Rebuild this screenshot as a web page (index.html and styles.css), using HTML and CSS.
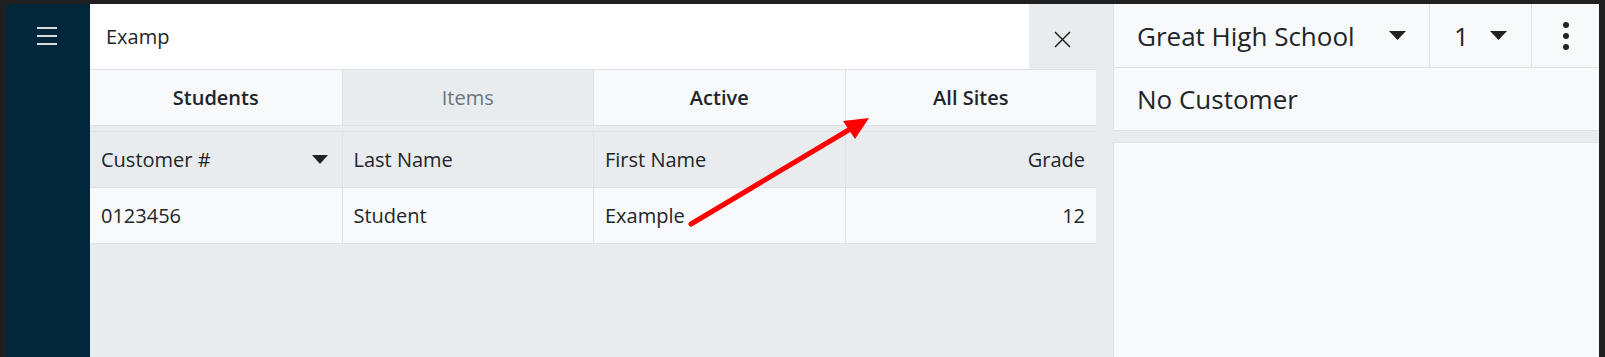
FILE: index.html
```html
<!DOCTYPE html>
<html lang="en">
<head>
    <meta charset="UTF-8">
    <meta name="viewport" content="width=device-width, initial-scale=1.0">
    <title>Customer Lookup</title>
    <link rel="stylesheet" href="styles.css">
</head>
<body>

    <div class="app">
        <!-- Side navigation -->
        <div class="sidebar">
            <div class="menu-btn">
                <span></span><span></span><span></span>
            </div>
        </div>

        <!-- Search column -->
        <div class="main">
            <div class="search-row">
                <div class="search-text">Examp</div>
                <div class="close-btn">
                    <svg width="17" height="17" viewBox="0 0 17 17">
                        <path d="M1 1 L16 16 M16 1 L1 16" stroke="#222" stroke-width="1.5" fill="none"/>
                    </svg>
                </div>
            </div>

            <div class="tabs">
                <div class="tab bold">Students</div>
                <div class="tab muted">Items</div>
                <div class="tab bold">Active</div>
                <div class="tab bold">All Sites</div>
            </div>

            <div class="table">
                <div class="cell head sort">Customer #
                    <svg width="16" height="9" viewBox="0 0 16 9"><polygon points="0,0 16,0 8,9" fill="#222"/></svg>
                </div>
                <div class="cell head">Last Name</div>
                <div class="cell head">First Name</div>
                <div class="cell head right">Grade</div>

                <div class="cell">0123456</div>
                <div class="cell">Student</div>
                <div class="cell">Example</div>
                <div class="cell right">12</div>
            </div>
        </div>

        <!-- Customer panel -->
        <div class="panel">
            <div class="topbar">
                <div class="site">Great High School
                    <svg width="17" height="9" viewBox="0 0 17 9"><polygon points="0,0 17,0 8.5,9" fill="#222"/></svg>
                </div>
                <div class="period">1
                    <svg width="17" height="9" viewBox="0 0 17 9"><polygon points="0,0 17,0 8.5,9" fill="#222"/></svg>
                </div>
                <div class="more">
                    <span></span><span></span><span></span>
                </div>
            </div>
            <div class="customer">No Customer</div>
            <div class="details"></div>
        </div>
    </div>

    <!-- annotation arrow -->
    <svg class="arrow" width="1605" height="357" viewBox="0 0 1605 357">
        <line x1="691" y1="224" x2="852" y2="128" stroke="#ff0000" stroke-width="5" stroke-linecap="round"/>
        <polygon points="869,118 843,121 855,139" fill="#ff0000"/>
    </svg>

</body>
</html>
```

FILE: styles.css
```css
body {
    margin: 0;
    padding: 4px 6px 0 6px;
    height: 357px;
    box-sizing: border-box;
    background: #202020;
    font-family: "Open Sans", "Noto Sans", sans-serif;
    color: #212529;
    overflow: hidden;
}
.app {
    display: flex;
    height: 353px;
    background: #e9ecef;
}
.sidebar {
    width: 84px;
    background: #02263a;
    flex-shrink: 0;
}
.menu-btn {
    width: 20px;
    margin: 23px 0 0 31px;
    display: flex;
    flex-direction: column;
    gap: 6px;
}
.menu-btn span {
    display: block;
    height: 2px;
    background: #d5dade;
}
.main {
    width: 1006px;
    flex-shrink: 0;
}
.search-row {
    display: flex;
    height: 65px;
    background: #fff;
    border-bottom: 1px solid #dee2e6;
}
.search-text {
    flex: 1;
    display: flex;
    align-items: center;
    padding-left: 16px;
    font-size: 20px;
}
.close-btn {
    width: 67px;
    background: #e9ecef;
    display: flex;
    align-items: center;
    justify-content: center;
    padding-top: 6px;
    box-sizing: border-box;
}
.tabs {
    display: grid;
    grid-template-columns: repeat(4, 1fr);
    height: 55px;
    border-bottom: 1px solid #dee2e6;
}
.tab {
    display: flex;
    align-items: center;
    justify-content: center;
    font-size: 20px;
    background: #f8f9fa;
    border-left: 1px solid #dee2e6;
}
.tab:first-child {
    border-left: none;
}
.tab.bold {
    font-weight: 600;
}
.tab.muted {
    background: #e9ecef;
    color: #6c757d;
}
.table {
    display: grid;
    grid-template-columns: repeat(4, 1fr);
    margin-top: 5px;
    border-top: 1px solid #dee2e6;
    border-bottom: 1px solid #dee2e6;
}
.cell {
    height: 55px;
    display: flex;
    align-items: center;
    padding: 0 11px;
    font-size: 20px;
    background: #f8f9fa;
    border-left: 1px solid #dee2e6;
}
.cell:nth-child(4n+1) {
    border-left: none;
}
.cell.head {
    background: #e9ecef;
    border-bottom: 1px solid #dee2e6;
}
.cell.sort {
    justify-content: space-between;
    padding-right: 14px;
}
.cell.right {
    justify-content: flex-end;
}
.panel {
    flex: 1;
    margin-left: 17px;
    display: flex;
    flex-direction: column;
}
.topbar {
    display: flex;
    height: 63px;
    background: #f8f9fa;
    border-left: 1px solid #dee2e6;
    border-bottom: 1px solid #dee2e6;
}
.site {
    width: 316px;
    display: flex;
    align-items: center;
    justify-content: space-between;
    padding: 0 23px 0 23px;
    box-sizing: border-box;
    font-size: 26px;
    border-right: 1px solid #dee2e6;
}
.period {
    width: 102px;
    display: flex;
    align-items: center;
    justify-content: space-between;
    padding: 0 24px 0 24px;
    box-sizing: border-box;
    font-size: 26px;
    border-right: 1px solid #dee2e6;
}
.more {
    flex: 1;
    display: flex;
    flex-direction: column;
    align-items: center;
    justify-content: center;
    gap: 5px;
}
.more span {
    width: 6px;
    height: 6px;
    border-radius: 50%;
    background: #222;
}
.customer {
    height: 62px;
    display: flex;
    align-items: center;
    padding-left: 23px;
    font-size: 26px;
    background: #f8f9fa;
    border-left: 1px solid #dee2e6;
    border-bottom: 1px solid #dee2e6;
}
.details {
    flex: 1;
    margin-top: 11px;
    background: #f8f9fa;
    border-left: 1px solid #dee2e6;
    border-top: 1px solid #dee2e6;
}
.arrow {
    position: absolute;
    left: 0;
    top: 0;
    pointer-events: none;
}
```
